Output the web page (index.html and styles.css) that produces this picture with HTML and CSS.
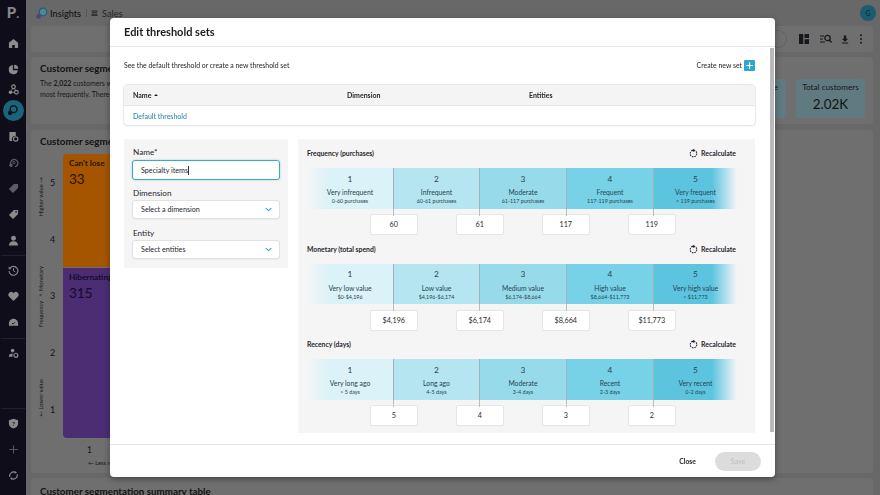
FILE: index.html
```html
<!DOCTYPE html>
<html lang="en">
<head>
<meta charset="utf-8">
<title>Edit threshold sets</title>
<link rel="stylesheet" href="styles.css">
</head>
<body>
<div class="app">
  <nav class="sidebar">
    <div class="logo">P<span>.</span></div>
    <svg class="nav-icon nav-home" viewBox="0 0 12 12"><path d="M6 1 1 5.200V11h3.600V7.600h2.800V11H11V5.200z"/></svg>
    <div class="nav-group">
      <svg class="nav-icon" viewBox="0 0 12 12"><path d="M5.300 1.200a5 5 0 1 0 5.500 5.500H5.300z"/><path d="M6.700 .8v4.500h4.500A4.600 4.600 0 0 0 6.700 .8z"/></svg>
      <svg class="nav-icon" viewBox="0 0 12 12"><circle cx="6" cy="3" r="2" fill="none" stroke-width="1.300"/><circle cx="2.800" cy="9" r="2"/><circle cx="9.200" cy="9" r="2" fill="none" stroke-width="1.300"/><path d="M5 4.800 3.600 7.200M7 4.800l1.400 2.400M4.800 9h2.400" fill="none" stroke-width="1"/></svg>
    </div>
    <div class="nav-active"><svg viewBox="0 0 12 12"><circle cx="6.600" cy="5.200" r="3.400" fill="none" stroke-width="1.500"/><circle cx="3" cy="9" r="2.200"/></svg></div>
    <svg class="nav-icon" viewBox="0 0 12 12"><path d="M1.500 1h7v4.600a3.400 3.400 0 0 0-3.600 5.400H1.500z"/><circle cx="8.400" cy="8.600" r="2.400" fill="none" stroke-width="1.200"/></svg>
    <svg class="nav-icon muted" viewBox="0 0 12 12"><path d="M3 8a4 4 0 1 1 4.600 2.600" fill="none" stroke-width="1.400"/><circle cx="3.200" cy="9" r="1.800"/><circle cx="6.400" cy="6" r="1.300" fill="none" stroke-width="1"/></svg>
    <svg class="nav-icon muted" viewBox="0 0 12 12"><path d="M6.500 1H11v4.500L5.500 11 1 6.500z"/></svg>
    <svg class="nav-icon" viewBox="0 0 12 12"><path d="M6.500 1H11v4.500L5.500 11 1 6.500z"/><circle cx="8.800" cy="3.200" r=".9" class="hole"/></svg>
    <svg class="nav-icon" viewBox="0 0 12 12"><circle cx="6" cy="3.600" r="2.700"/><path d="M1 11.500c0-3 2.200-4.600 5-4.600s5 1.600 5 4.600z"/></svg>
    <div class="nav-rule"></div>
    <svg class="nav-icon" viewBox="0 0 12 12"><path d="M2.200 3.400A4.800 4.800 0 1 1 1.200 6.500" fill="none" stroke-width="1.200"/><path d="M.8 1.600v3h3z"/><path d="M6 3.400v3l2 1" fill="none" stroke-width="1"/></svg>
    <svg class="nav-icon" viewBox="0 0 12 12"><path d="M6 11 1.300 6.200a3 3 0 0 1 4.300-4.200l.4.5.4-.5a3 3 0 0 1 4.300 4.200z"/></svg>
    <svg class="nav-icon" viewBox="0 0 12 12"><path d="M1 9.500V7a5 5 0 0 1 10 0v2.500z"/><path d="m4.400 6.600 1.200 1.200 2-2.200" class="hole-line" fill="none" stroke-width="1"/></svg>
    <div class="nav-rule nav-rule-b"></div>
    <svg class="nav-icon" viewBox="0 0 12 12"><circle cx="5" cy="2.800" r="2"/><path d="M.8 9.500c0-2.400 1.800-3.600 4.200-3.600v3.600z"/><circle cx="8.600" cy="8" r="2.200" fill="none" stroke-width="1.200"/></svg>
    <div class="nav-spacer"></div>
    <div class="nav-rule"></div>
    <svg class="nav-icon" viewBox="0 0 12 12"><path d="M6 .8 11 2.400v4C11 9 8.800 10.600 6 11.400 3.200 10.600 1 9 1 6.400v-4z"/><text x="6" y="8.400" class="nav-q">?</text></svg>
    <svg class="nav-icon muted" viewBox="0 0 12 12"><path d="M6 1.500v9M1.500 6h9" fill="none" stroke-width="1"/></svg>
    <svg class="nav-icon" viewBox="0 0 12 12"><path d="M2 7.500A4.300 4.300 0 0 1 8 2.500M10 4.500A4.300 4.300 0 0 1 4 9.500" fill="none" stroke-width="1.200"/><path d="M7.500 1 9.800 2.900 7.300 4.100zM4.500 11 2.200 9.100 4.700 7.900z"/></svg>
  </nav>

  <div class="main">
    <header class="topbar">
      <svg class="insights-icon" viewBox="0 0 12 12"><circle cx="7" cy="5" r="3.800" fill="#7ecbe4" stroke="#2a93b5" stroke-width="1.200"/><circle cx="2.600" cy="9.400" r="2.300" fill="#8a5fc0"/></svg>
      <span class="crumb-main">Insights</span>
      <span class="crumb-sep"></span>
      <svg class="sales-icon" viewBox="0 0 8 8"><path d="M.5 1h7v1.200h-7zM1 3.200h6v1.200H1zM.5 5.400h7v1.800h-7z"/></svg>
      <span class="crumb">Sales</span>
      <span class="avatar">G</span>
    </header>

    <section class="card toolbar">
      <span class="pill"></span>
      <svg class="tool tool-layout" viewBox="0 0 10 10"><path d="M0 0h4.300v10H0zM5.500 0H10v4H5.500zM5.500 5.200H10V10H5.500z"/></svg>
      <svg class="tool tool-search" viewBox="0 0 12 10"><path d="M0 1.500h4v1H0zM0 4.500h3v1H0zM0 7.500h5v1H0z"/><circle cx="7.500" cy="4" r="2.700" fill="none" stroke-width="1.300"/><path d="m9.300 6 2.200 2.500" fill="none" stroke-width="1.300"/></svg>
      <svg class="tool tool-down" viewBox="0 0 10 10"><path d="M3.500 0h3v4H9L5 7.800 1 4h2.500zM1 8.800h8V10H1z"/></svg>
      <svg class="tool tool-more" viewBox="0 0 4 10"><circle cx="2" cy="1.300" r="1"/><circle cx="2" cy="5" r="1"/><circle cx="2" cy="8.700" r="1"/></svg>
    </section>

    <section class="card summary">
      <div class="summary-text">
        <h2 class="card-title card-title-clip">Customer segmentation</h2>
        <p class="summary-copy">The <b>2,022</b> customers were<br>most frequently. There are</p>
      </div>
      <div class="stat stat-value"><span class="stat-label">Average value</span><span class="stat-num">$12.1</span></div>
      <div class="stat"><span class="stat-label">Total customers</span><span class="stat-num">2.02K</span></div>
    </section>

    <section class="card chart-card">
      <h2 class="card-title card-title-clip">Customer segmentation</h2>
      <div class="chart">
        <div class="y-text">
          <span class="y-high">Higher value →</span>
          <span class="y-mid">Frequency × Monetary</span>
          <span class="y-low">← Lower value</span>
        </div>
        <div class="y-nums"><span>5</span><span>4</span><span>3</span><span>2</span><span>1</span></div>
        <div class="tiles">
          <div class="tile tile-orange"><span class="tile-name">Can't lose</span><span class="tile-num">33</span></div>
          <div class="tile tile-purple"><span class="tile-name">Hibernating</span><span class="tile-num">315</span></div>
        </div>
      </div>
      <div class="x-num">1</div>
      <div class="x-text">← Less recent</div>
    </section>

    <section class="card last-card">
      <h2 class="card-title">Customer segmentation summary table</h2>
    </section>
  </div>
</div>

<div class="scrim"></div>

<div class="modal" role="dialog" aria-label="Edit threshold sets">
  <header class="modal-head"><h1>Edit threshold sets</h1></header>
  <div class="modal-body">
    <div class="intro">
      <p>See the default threshold or create a new threshold set</p>
      <div class="create">Create new set <span class="plus"><svg viewBox="0 0 12 12"><path d="M6 2.500v7M2.500 6h7"/></svg></span></div>
    </div>

    <div class="sets">
      <div class="sets-head">
        <span class="c-name">Name <i class="sort"></i></span>
        <span class="c-dim">Dimension</span>
        <span>Entities</span>
      </div>
      <div class="sets-row"><a class="link">Default threshold</a></div>
    </div>

    <div class="editor">
      <form class="fields">
        <label class="field-label">Name*</label>
        <div class="input input-focus">Specialty items<span class="caret"></span></div>
        <label class="field-label">Dimension</label>
        <div class="input select">Select a dimension<svg viewBox="0 0 10 6"><path d="m1 1 4 3.600L9 1"/></svg></div>
        <label class="field-label">Entity</label>
        <div class="input select">Select entities<svg viewBox="0 0 10 6"><path d="m1 1 4 3.600L9 1"/></svg></div>
      </form>

      <div class="thresholds">
        <section class="dim">
          <div class="dim-head"><h3>Frequency (purchases)</h3><span class="recalc"><svg viewBox="0 0 12 12"><circle cx="6" cy="6.800" r="4.400" stroke-dasharray="2.200 1.200"/><path class="arrow" d="M7 .2v4.600L3.400 2.500z"/></svg>Recalculate</span></div>
          <div class="band">
            <div class="cell c1"><b>1</b><span class="lbl">Very infrequent</span><small>0-60 purchases</small></div>
            <div class="cell c2"><b>2</b><span class="lbl">Infrequent</span><small>60-61 purchases</small></div>
            <div class="cell c3"><b>3</b><span class="lbl">Moderate</span><small>61-117 purchases</small></div>
            <div class="cell c4"><b>4</b><span class="lbl">Frequent</span><small>117-119 purchases</small></div>
            <div class="cell c5"><b>5</b><span class="lbl">Very frequent</span><small>&gt; 119 purchases</small></div>
          </div>
          <div class="cuts"><span>60</span><span>61</span><span>117</span><span>119</span></div>
        </section>

        <section class="dim">
          <div class="dim-head"><h3>Monetary (total spend)</h3><span class="recalc"><svg viewBox="0 0 12 12"><circle cx="6" cy="6.800" r="4.400" stroke-dasharray="2.200 1.200"/><path class="arrow" d="M7 .2v4.600L3.400 2.500z"/></svg>Recalculate</span></div>
          <div class="band">
            <div class="cell c1"><b>1</b><span class="lbl">Very low value</span><small>$0-$4,196</small></div>
            <div class="cell c2"><b>2</b><span class="lbl">Low value</span><small>$4,196-$6,174</small></div>
            <div class="cell c3"><b>3</b><span class="lbl">Medium value</span><small>$6,174-$8,664</small></div>
            <div class="cell c4"><b>4</b><span class="lbl">High value</span><small>$8,664-$11,773</small></div>
            <div class="cell c5"><b>5</b><span class="lbl">Very high value</span><small>&gt; $11,773</small></div>
          </div>
          <div class="cuts"><span>$4,196</span><span>$6,174</span><span>$8,664</span><span>$11,773</span></div>
        </section>

        <section class="dim">
          <div class="dim-head"><h3>Recency (days)</h3><span class="recalc"><svg viewBox="0 0 12 12"><circle cx="6" cy="6.800" r="4.400" stroke-dasharray="2.200 1.200"/><path class="arrow" d="M7 .2v4.600L3.400 2.500z"/></svg>Recalculate</span></div>
          <div class="band">
            <div class="cell c1"><b>1</b><span class="lbl">Very long ago</span><small>&gt; 5 days</small></div>
            <div class="cell c2"><b>2</b><span class="lbl">Long ago</span><small>4-5 days</small></div>
            <div class="cell c3"><b>3</b><span class="lbl">Moderate</span><small>3-4 days</small></div>
            <div class="cell c4"><b>4</b><span class="lbl">Recent</span><small>2-3 days</small></div>
            <div class="cell c5"><b>5</b><span class="lbl">Very recent</span><small>0-2 days</small></div>
          </div>
          <div class="cuts"><span>5</span><span>4</span><span>3</span><span>2</span></div>
        </section>
      </div>
    </div>
    <div class="scroll-thumb"></div>
  </div>
  <footer class="modal-foot">
    <button class="btn-close" type="button">Close</button>
    <button class="btn-save" type="button">Save</button>
  </footer>
</div>
</body>
</html>
```

FILE: styles.css
```css
* { box-sizing: border-box; }
html, body { margin: 0; height: 100%; overflow: hidden; }
body { font-family: Lato, "Open Sans", sans-serif; color: #1d1d24; background: #a0a0a0; }
h1, h2, h3, p { margin: 0; }

/* background application */
.app { display: flex; width: 880px; height: 495px; overflow: hidden; }
.sidebar { flex: 0 0 26px; height: 495px; background: #1a1429; display: flex; flex-direction: column; align-items: center; padding: 3px 0 14.500px; }
.logo { font-size: 15px; font-weight: 900; color: #d0d0d0; line-height: 18px; height: 18px; }
.logo span { font-size: 12px; }
.nav-icon { width: 11px; height: 11px; fill: #d6d6d6; stroke: #d6d6d6; stroke-width: 0; flex: none; margin-top: 15px; }
.nav-icon.muted { fill: #8f8c99; stroke: #8f8c99; }
.nav-home { margin-top: 16.500px; }
.nav-group { display: flex; flex-direction: column; align-items: center; margin-top: 2px; padding: 3px 0; }
.nav-group .nav-icon + .nav-icon { margin-top: 9px; }
.nav-group .nav-icon:first-child { margin-top: 10px; }
.nav-active { width: 21px; height: 21px; border-radius: 50%; background: #2a9cbc; margin-top: 2px; display: flex; align-items: center; justify-content: center; flex: none; }
.nav-active svg { width: 12px; height: 12px; fill: #15212c; stroke: #15212c; stroke-width: 0; }
.nav-active + .nav-icon { margin-top: 10px; }
.hole { fill: #1a1429; }
.hole-line { stroke: #1a1429; }
.nav-q { font-size: 7px; font-weight: 700; fill: #1a1429; stroke: none; text-anchor: middle; font-family: Lato, sans-serif; }
.nav-rule { width: 24px; height: 1px; background: #38324a; margin-top: 9px; flex: none; }
.nav-rule + .nav-icon { margin-top: 9px; }
.nav-rule-b { margin-top: 10px; }
.nav-spacer { flex: 1; }

.main { flex: 1; min-width: 0; padding: 0 7px 0 5px; display: flex; flex-direction: column; }
.topbar { flex: 0 0 26px; display: flex; align-items: center; padding-left: 5px; font-size: 9.200px; }
.insights-icon { width: 12px; height: 12px; margin-right: 2px; }
.crumb-main { font-weight: 500; color: #1d1d24; }
.crumb-sep { width: 1px; height: 8px; background: #88888c; margin: 0 4px 0 5px; }
.sales-icon { width: 7px; height: 8px; fill: #333; margin-right: 4px; }
.crumb { color: #3a3a40; }
.avatar { margin-left: auto; margin-right: -3px; width: 16px; height: 16px; border-radius: 50%; background: #2a8eaa; color: #0c4252; font-size: 7px; display: flex; align-items: center; justify-content: center; }

.card { background: #ababab; border-radius: 3px; }
.toolbar { flex: 0 0 26px; display: flex; align-items: center; justify-content: flex-end; padding-right: 10px; }
.pill { width: 40px; height: 18px; border-radius: 9px; border: 1px solid #979797; margin-right: 12px; }
.tool { fill: #26262c; stroke: #26262c; stroke-width: 0; height: 10px; }
.tool-layout { width: 10px; margin-right: 11px; }
.tool-search { width: 12px; margin-right: 9px; }
.tool-down { width: 8px; height: 11px; margin-right: 10px; }
.tool-more { width: 4px; }

.summary { flex: 0 0 67px; margin-top: 5px; display: flex; align-items: flex-start; padding: 5px 8px 0 9px; }
.summary-text { flex: 1; }
.card-title { font-size: 9.800px; font-weight: 700; line-height: 13px; color: #1c1c22; white-space: nowrap; }
.card-title-clip { width: 70px; overflow: hidden; }
.summary-copy { font-size: 7px; line-height: 11px; margin-top: 3px; color: #28282e; }
.stat { width: 69px; height: 39px; margin-top: 17px; border-radius: 3px; background: #94bcc7; display: flex; flex-direction: column; align-items: center; padding-top: 3px; }
.stat-value { margin-right: 10px; width: 66px; }
.stat-label { font-size: 8.200px; line-height: 11px; color: #25282c; }
.stat-num { font-size: 13.500px; line-height: 17px; margin-top: 3px; color: #1c1c22; }

.chart-card { flex: 0 0 343px; margin-top: 6px; padding: 5px 0 0 9px; }
.chart { display: flex; height: 284px; margin-top: 6px; }
.y-text { width: 12px; margin-left: -2px; display: flex; flex-direction: column; align-items: flex-start; font-size: 5.800px; color: #2b2b30; }
.y-text span { writing-mode: vertical-rl; transform: rotate(180deg); line-height: 6px; }
.y-high { margin-top: 23px; }
.y-mid { margin-top: 50px; }
.y-low { margin-top: 51px; }
.y-nums { width: 9px; display: flex; flex-direction: column; font-size: 9px; color: #222228; }
.y-nums span { flex: 1; display: flex; align-items: center; }
.tiles { margin-left: 4px; width: 340px; display: flex; flex-direction: column; gap: 1px; }
.tile { display: flex; flex-direction: column; padding: 4px 6px; }
.tile-orange { flex: 0 0 113px; background: #fe8300; border-radius: 4px 4px 0 0; color: #3a1c02; }
.tile-purple { flex: 1; background: #7545b2; border-radius: 0 0 4px 4px; color: #1f0f3d; }
.tile-name { font-size: 8.200px; font-weight: 700; line-height: 11px; }
.tile-num { font-size: 13.500px; line-height: 16px; margin-top: 2px; }
.x-num { font-size: 8.500px; margin: 7px 0 0 47px; line-height: 10px; color: #222228; }
.x-text { font-size: 5.800px; margin: 4px 0 0 48px; line-height: 8px; color: #2b2b30; }

.last-card { flex: 0 0 30px; margin-top: 5px; padding: 7px 0 0 9px; }

.scrim { position: fixed; inset: 0; background: rgba(0, 0, 0, .35); }

/* modal */
.modal { position: absolute; left: 110px; top: 18px; width: 665px; height: 459px; background: #fff; border-radius: 4px; display: flex; flex-direction: column; box-shadow: 0 2px 6px rgba(0, 0, 0, .35); overflow: hidden; }
.modal-head { flex: 0 0 29px; display: flex; align-items: center; padding: 0 0 2px 14px; border-bottom: 1.500px solid #e6e6e6; }
.modal-head h1 { font-size: 11px; font-weight: 700; color: #1c1c22; }
.modal-body { flex: 1; min-height: 0; padding: 0 20px 0 14px; position: relative; overflow: hidden; }
.intro { display: flex; align-items: center; justify-content: space-between; height: 24px; margin-top: 6px; font-size: 6.900px; color: #26262c; }
.create { display: flex; align-items: center; gap: 2px; }
.plus { width: 11px; height: 11px; background: #2da7cf; border-radius: 1px; display: inline-flex; }
.plus svg { width: 11px; height: 11px; fill: none; stroke: #fff; stroke-width: 1.300; }
.sets { height: 40px; margin-top: 8px; border-radius: 4px; box-shadow: 0 0 0 1px #e8e8e8, 0 1px 2px rgba(0, 0, 0, .12); font-size: 7px; overflow: hidden; }
.sets-head { height: 21px; background: #f4f4f4; display: flex; align-items: center; padding-left: 9px; font-weight: 700; color: #26262c; border-bottom: 1px solid #e6e6e6; }
.c-name { width: 214px; }
.c-dim { width: 182px; }
.sort { display: inline-block; border: 2px solid transparent; border-bottom: 2.500px solid #222; border-top: 0; vertical-align: 2px; margin-left: 1px; }
.sets-row { height: 19px; display: flex; align-items: center; padding-left: 9px; }
.link { color: #2d8ca6; font-weight: 500; }

.editor { display: flex; gap: 10px; align-items: flex-start; margin-top: 14px; }
.fields { flex: 0 0 164px; height: 129px; background: #f5f5f5; padding: 9px 8px 0; display: flex; flex-direction: column; }
.field-label { font-size: 8.200px; line-height: 9px; color: #26262c; padding-left: 1px; height: 12px; flex: none; }
.input { display: flex; align-items: center; background: #fff; font-size: 7.200px; color: #26262c; flex: none; }
.input-focus { height: 20px; margin-bottom: 9px; border: 1px solid #3ba9c9; border-radius: 3px; padding-left: 8px; box-shadow: 0 0 2px rgba(59, 169, 201, .5); }
.caret { width: 1px; height: 9px; background: #333; }
.select { height: 17px; margin: 0 1px 11px; padding: 0 7px 0 8px; border-radius: 2px; justify-content: space-between; box-shadow: 0 0 0 1px #e2e2e2, 0 1px 2px rgba(0, 0, 0, .12); }
.select svg { width: 7px; height: 5px; fill: none; stroke: #3ba9c9; stroke-width: 1.600; }

.thresholds { flex: 0 0 457px; height: 294px; background: #f5f5f5; padding: 5px 18px 0 9px; display: flex; flex-direction: column; }
.dim { display: flex; flex-direction: column; height: 95.700px; flex: none; }
.dim-head { display: flex; align-items: center; justify-content: space-between; height: 18px; }
.dim-head h3 { font-size: 6.800px; font-weight: 700; color: #26262c; }
.recalc { display: flex; align-items: center; gap: 3px; font-size: 6.900px; font-weight: 700; color: #26262c; margin-right: 1px; }
.recalc svg { width: 9px; height: 10px; fill: none; stroke: #26262c; stroke-width: 1.400; }
.recalc .arrow { fill: #26262c; stroke: none; }
.band { display: grid; grid-template-columns: 86px 86px 87px 87px 84px; height: 40.500px; margin-top: 6px; flex: none; }
.cell { position: relative; display: flex; flex-direction: column; align-items: center; padding-top: 5.500px; color: #274450; border-left: 1px solid #9fb3ba; }
.cell b { font-size: 8.300px; line-height: 10px; font-weight: 400; }
.lbl { font-size: 6.800px; line-height: 10px; margin-top: 3.500px; }
.cell small { font-size: 5.400px; line-height: 7px; margin-top: 1px; }
.cell::after { content: ""; position: absolute; left: -1px; top: 100%; width: 1px; height: 7px; background: #bdbdbd; }
.c1 { border-left: 0; background: linear-gradient(90deg, rgba(218, 242, 248, 0), #daf2f8 26%); }
.c1::after { display: none; }
.c2 { background: #b5e5f1; }
.c3 { background: #97dbeb; }
.c4 { background: #77d1e7; }
.c5 { background: linear-gradient(90deg, #5cc4df 70%, rgba(92, 196, 223, 0)); }
.cuts { display: flex; gap: 40.500px; padding-left: 64px; margin-top: 6.500px; }
.cuts span { width: 45.500px; height: 19px; background: #fff; border-radius: 1px; box-shadow: 0 0 0 1px #e6e6e6, 0 1px 1px rgba(0, 0, 0, .1); display: flex; align-items: center; justify-content: center; font-size: 7.200px; color: #2b2b30; }

.scroll-thumb { position: absolute; right: 1.500px; top: 1px; width: 4px; height: 384px; background: #b9b9b9; }

.modal-foot { flex: 0 0 33px; border-top: 1px solid #e6e6e6; display: flex; align-items: center; justify-content: flex-end; padding-right: 14px; gap: 19px; }
.btn-close { border: 0; background: none; padding: 0; font: 700 6.800px Lato, sans-serif; color: #26262c; }
.btn-save { width: 46px; height: 19px; border: 0; border-radius: 10px; background: #dcdcdc; color: #bcbcbc; font: 400 7px Lato, sans-serif; }
```
